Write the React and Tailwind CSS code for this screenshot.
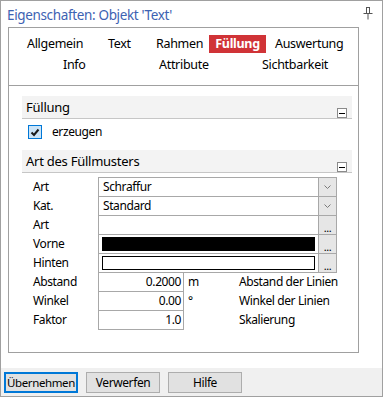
import React from "react";

const font = { fontFamily: '"Noto Sans", "Open Sans", sans-serif' };

function Collapse() {
  return (
    <div className="w-[10px] h-[10px] border border-[#8a8a8a] bg-white flex items-center justify-center">
      <div className="w-[6px] h-[1px] bg-black" />
    </div>
  );
}

function SectionHeader({ title }) {
  return (
    <div className="h-[23px] bg-[#f3f3f3] border-b border-[#c6c6c6] flex justify-between pl-[4px] pr-[5px]">
      <span className="text-[13px] tracking-[-0.25px] leading-[23px] text-black">{title}</span>
      <div className="pt-[12px]">
        <Collapse />
      </div>
    </div>
  );
}

function Chevron() {
  return (
    <svg width="9" height="6" viewBox="0 0 9 6">
      <path d="M1.5 1.5 L4.5 4.5 L7.5 1.5" fill="none" stroke="#7a7a7a" strokeWidth="1" />
    </svg>
  );
}

function SideBtn({ kind }) {
  return (
    <div className="w-[19px] h-[20px] -ml-px border border-[#a8a8a8] bg-[#e6e6e6] flex items-center justify-center">
      {kind === "chev" ? (
        <Chevron />
      ) : (
        <span className="text-[11px] leading-none text-black pt-[5px] tracking-[-0.5px]">...</span>
      )}
    </div>
  );
}

const txt = "text-[12px] tracking-[-0.4px] text-black";

function Row({ label, children, first, btn }) {
  return (
    <div className={`flex items-center h-[20px] ${first ? "" : "-mt-px"}`}>
      <span className={`w-[76px] pl-[11px] leading-[20px] ${txt}`}>{label}</span>
      <div className="w-[221px] h-[20px] border border-[#a8a8a8] bg-white flex items-center">{children}</div>
      <SideBtn kind={btn} />
    </div>
  );
}

function NumRow({ label, value, unit, desc }) {
  return (
    <div className="flex items-center h-[20px] -mt-px">
      <span className={`w-[76px] pl-[11px] leading-[20px] ${txt}`}>{label}</span>
      <div className={`w-[86px] h-[20px] border border-[#a8a8a8] bg-white flex items-center justify-end pr-[2px] ${txt}`}>
        {value}
      </div>
      <span className={`w-[55px] pl-[4px] leading-[20px] ${txt}`}>{unit}</span>
      <span className={`leading-[20px] ${txt}`}>{desc}</span>
    </div>
  );
}

export default function App() {
  return (
    <div style={font} className="w-[383px] h-[397px] border border-[#a0a0a0] bg-white flex flex-col">
      {/* Title */}
      <div className="h-[26px] flex items-start justify-between pl-[6px] pr-[9px]">
        <span className="text-[13.5px] tracking-[-0.35px] leading-[20px] pt-[4px] text-[#3d62b2]">Eigenschaften: Objekt 'Text'</span>
        <svg width="10" height="13" viewBox="0 0 10 13" className="mt-[6px]">
          <path d="M3 0.5 H7 M3.5 0.5 V6 M6.5 0.5 V6 M0.5 6.5 H9.5 M5 6.5 V12.5" fill="none" stroke="#555" strokeWidth="1" />
        </svg>
      </div>

      {/* Main box */}
      <div className="ml-[7px] w-[351px] h-[326px] border border-[#a0a0a0] flex flex-col">
        {/* Tabs */}
        <div className="h-[58px] border-b border-[#a0a0a0] pt-[7px] text-[12.5px] tracking-[-0.3px] text-black">
          <div className="flex h-[18px] items-center leading-[18px]">
            <span className="ml-[18px] w-[81px]">Allgemein</span>
            <span className="w-[48px]">Text</span>
            <span className="w-[53px]">Rahmen</span>
            <span className="w-[57px] h-[18px] bg-[#d03337] text-white font-bold text-center">Füllung</span>
            <span className="ml-[9px]">Auswertung</span>
          </div>
          <div className="flex h-[18px] items-center leading-[18px] mt-[3px]">
            <span className="ml-[54px] w-[96px]">Info</span>
            <span className="w-[103px]">Attribute</span>
            <span>Sichtbarkeit</span>
          </div>
        </div>

        {/* Content */}
        <div className="pl-[13px] pr-[6px] pt-[10px]">
          <SectionHeader title="Füllung" />
          <div className="h-[31px] flex items-start pt-[6px] pl-[6px]">
            <div className="w-[14px] h-[14px] border border-[#0078d7] bg-[#cce4f7] flex items-center justify-center">
              <svg width="10" height="9" viewBox="0 0 10 9">
                <path d="M1.5 4.5 L4 7 L8.5 1.5" fill="none" stroke="#1a1a1a" strokeWidth="2" />
              </svg>
            </div>
            <span className={`ml-[10px] leading-[14px] ${txt}`}>erzeugen</span>
          </div>
          <SectionHeader title="Art des Füllmusters" />

          <div className="mt-[4px]">
            <Row label="Art" first btn="chev">
              <span className={`pl-[4px] ${txt}`}>Schraffur</span>
            </Row>
            <Row label="Kat." btn="chev">
              <span className={`pl-[4px] ${txt}`}>Standard</span>
            </Row>
            <Row label="Art" btn="dots" />
            <Row label="Vorne" btn="dots">
              <div className="w-full h-full px-[3px] py-[2px]">
                <div className="w-full h-full bg-black" />
              </div>
            </Row>
            <Row label="Hinten" btn="dots">
              <div className="w-full h-full px-[3px] py-[2px]">
                <div className="w-full h-full bg-white border border-black" />
              </div>
            </Row>
            <NumRow label="Abstand" value="0.2000" unit="m" desc="Abstand der Linien" />
            <NumRow label="Winkel" value="0.00" unit="°" desc="Winkel der Linien" />
            <NumRow label="Faktor" value="1.0" unit="" desc="Skalierung" />
          </div>
        </div>
      </div>

      <div className="flex-1" />

      {/* Footer */}
      <div className="h-[28px] bg-[#f0f0f0] flex items-start pt-[4px] pl-[3px] gap-[8px]">
        <button className="w-[74px] h-[21px] border-2 border-[#0078d7] bg-[#e1e1e1] leading-[17px] text-[11.5px] tracking-[-0.4px] text-black">Übernehmen</button>
        <button className={`w-[74px] h-[21px] border border-[#adadad] bg-[#e1e1e1] leading-[19px] ${txt}`}>Verwerfen</button>
        <button className={`w-[74px] h-[21px] border border-[#adadad] bg-[#e1e1e1] leading-[19px] ${txt}`}>Hilfe</button>
      </div>
    </div>
  );
}
